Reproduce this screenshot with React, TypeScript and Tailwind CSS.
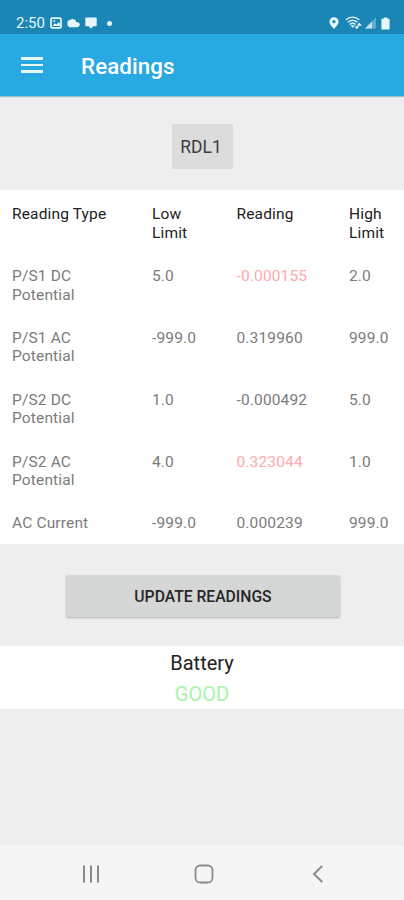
import React from "react";

interface ReadingRow {
  type: string;
  low: string;
  reading: string;
  high: string;
  outOfRange?: boolean;
}

const rows: ReadingRow[] = [
  { type: "P/S1 DC Potential", low: "5.0", reading: "-0.000155", high: "2.0", outOfRange: true },
  { type: "P/S1 AC Potential", low: "-999.0", reading: "0.319960", high: "999.0" },
  { type: "P/S2 DC Potential", low: "1.0", reading: "-0.000492", high: "5.0" },
  { type: "P/S2 AC Potential", low: "4.0", reading: "0.323044", high: "1.0", outOfRange: true },
  { type: "AC Current", low: "-999.0", reading: "0.000239", high: "999.0" },
];

const rowClasses =
  "grid grid-cols-[140px_84.5px_112.5px_1fr] pl-3 text-[15.5px] leading-[18.5px] tracking-[0.15px]";

function StatusBar() {
  return (
    <div className="flex h-[34px] items-end justify-between bg-[#1a86b6] pb-[3px] pl-4 pr-[14px] text-[#e6f6fc]">
      <div className="flex h-4 items-center">
        <span className="w-[34px] text-[15px] leading-4">2:50</span>
        <svg className="h-3 w-3" viewBox="0 0 12 12" fill="none">
          <rect x="1" y="1.2" width="10" height="9.6" rx="1" stroke="currentColor" strokeWidth="1.7" />
          <path d="M2.5 9 5 6.3l1.5 1.3L8.700 5 10 7v2z" fill="currentColor" />
          <circle cx="4.2" cy="4.1" r="1" fill="currentColor" />
        </svg>
        <svg className="ml-[5px] h-3 w-[13px]" viewBox="0 0 13 12" fill="currentColor">
          <path d="M3.300 10.200C1.500 10.200.300 9 .300 6.200c0-2 1.200-3.200 2.600-3.200 1-.9 2.100-1.100 3.100-1 1.900.2 2.900 1.400 3.300 3 2 .1 3.500 1.100 3.500 2.600s-1.200 2.600-2.800 2.600z" />
        </svg>
        <svg className="ml-[5px] h-3 w-3" viewBox="0 0 12 12" fill="currentColor">
          <path d="M1.300.6h9.400c.6 0 1 .4 1 1v6.600c0 .6-.4 1-1 1H8.200L5.900 11.800 3.800 9.200H1.300c-.6 0-1-.4-1-1V1.600c0-.6.400-1 1-1z" />
        </svg>
        <span className="ml-[10px] h-[5px] w-[5px] rounded-full bg-current" />
      </div>

      <div className="flex h-4 items-center">
        <svg className="h-3 w-[10px]" viewBox="0 0 10 12" fill="currentColor">
          <path
            fillRule="evenodd"
            d="M5 .2C2.400.2.400 2.200.400 4.700.4 7.600 5 11.800 5 11.800s4.600-4.200 4.600-7.100C9.600 2.200 7.600.2 5 .2zm0 2.900a1.600 1.600 0 1 1 0 3.200 1.600 1.600 0 0 1 0-3.200z"
          />
        </svg>
        <svg className="ml-[6px] h-[14px] w-[17px]" viewBox="0 0 17 14" fill="none" stroke="currentColor">
          <path d="M.8 3.900c3.800-3.600 9.800-3.600 13.600 0M2.700 6.200c2.800-2.500 7-2.500 9.800 0M4.700 8.400c1.700-1.400 4.100-1.400 5.800 0" strokeWidth="1.300" />
          <path d="M5.600 9.200h4l-2 2.800z" fill="currentColor" stroke="none" />
          <path d="M9.300 10.300h5l-2.500 3zM11.800 9.800h5l-2.500-3.200z" fill="currentColor" stroke="none" />
        </svg>
        <svg className="ml-[3px] h-3 w-[11px]" viewBox="0 0 11 12" fill="currentColor">
          <path d="M11 .5v11H0z" opacity=".35" />
          <path d="M7 4.500v7H0z" opacity=".75" />
        </svg>
        <svg className="ml-[5px] h-[13px] w-[9px]" viewBox="0 0 9 13" fill="currentColor">
          <path d="M2.700.5h3.600v1.300h1.300c.6 0 1 .4 1 1v8.700c0 .6-.4 1-1 1H1.400c-.6 0-1-.4-1-1V2.800c0-.6.400-1 1-1h1.300z" />
        </svg>
      </div>
    </div>
  );
}

function AppBar() {
  return (
    <header className="flex h-[62px] items-center bg-[#29a9e1] pl-[21px] text-white shadow-[0_1px_1px_rgba(60,130,160,0.45)]">
      <button type="button" aria-label="Open menu" className="flex w-[22px] flex-col gap-1">
        <span className="h-[2.5px] w-full bg-[#e8f7fd]" />
        <span className="h-[2.5px] w-full bg-[#e8f7fd]" />
        <span className="h-[2.5px] w-full bg-[#e8f7fd]" />
      </button>
      <h1 className="ml-[38px] pt-px text-[22.3px] font-medium leading-6 tracking-[0.1px]">Readings</h1>
    </header>
  );
}

function ReadingsTable() {
  return (
    <section className="h-[354px] bg-white pt-[15.4px]">
      <div className={`${rowClasses} h-[61.8px] text-[#222]`}>
        <span>Reading Type</span>
        <span className="w-10">Low Limit</span>
        <span>Reading</span>
        <span className="w-10">High Limit</span>
      </div>
      {rows.map((row) => (
        <div key={row.type} className={`${rowClasses} h-[61.8px] text-[#7b7b7b]`}>
          <span className="w-[85px]">{row.type}</span>
          <span>{row.low}</span>
          <span className={row.outOfRange ? "text-[#ffa9ac]" : ""}>{row.reading}</span>
          <span>{row.high}</span>
        </div>
      ))}
    </section>
  );
}

function NavigationBar() {
  return (
    <nav className="flex h-[54px] items-center bg-[#f5f5f5] pl-[82px] pt-px text-[#8a8a8a]">
      <svg className="h-[18px] w-[18px]" viewBox="0 0 18 18" stroke="currentColor" strokeWidth="2">
        <path d="M2 .5v17M9 .5v17M16 .5v17" />
      </svg>
      <svg className="ml-[94px] h-5 w-5" viewBox="0 0 20 20" fill="none" stroke="currentColor" strokeWidth="1.800">
        <rect x="1.500" y="1.500" width="17" height="17" rx="4.800" />
      </svg>
      <svg className="ml-[98px] h-[18px] w-3" viewBox="0 0 12 18" fill="none" stroke="currentColor" strokeWidth="1.900">
        <path d="M10.200 1 2 9l8.200 8" />
      </svg>
    </nav>
  );
}

export default function App() {
  return (
    <div className="flex h-[900px] w-[404px] flex-col overflow-hidden bg-[#eeeeee] font-[Roboto,sans-serif]">
      <StatusBar />
      <AppBar />

      <main className="flex flex-1 flex-col">
        <div className="flex h-[94px] justify-center pt-7">
          <div className="flex h-[45px] w-[61px] items-center justify-center bg-[#dcdcdc] pr-0.5 pt-0.5 text-[17.5px] text-[#3c3c3c]">
            RDL1
          </div>
        </div>

        <ReadingsTable />

        <div className="flex h-[102px] justify-center pl-0.5 pt-[31px]">
          <button
            type="button"
            className="h-[42px] w-[274px] rounded-[2px] bg-[#d5d7d6] pt-px text-[15.7px] font-medium text-[#262626] shadow-[0_1px_2px_rgba(0,0,0,0.25)]"
          >
            UPDATE READINGS
          </button>
        </div>

        <section className="h-[63px] bg-white pt-0.5 text-center text-[20px] leading-[30.5px]">
          <p className="text-[#222]">Battery</p>
          <p className="text-[#a8f5a8]">GOOD</p>
        </section>
      </main>

      <NavigationBar />
    </div>
  );
}
